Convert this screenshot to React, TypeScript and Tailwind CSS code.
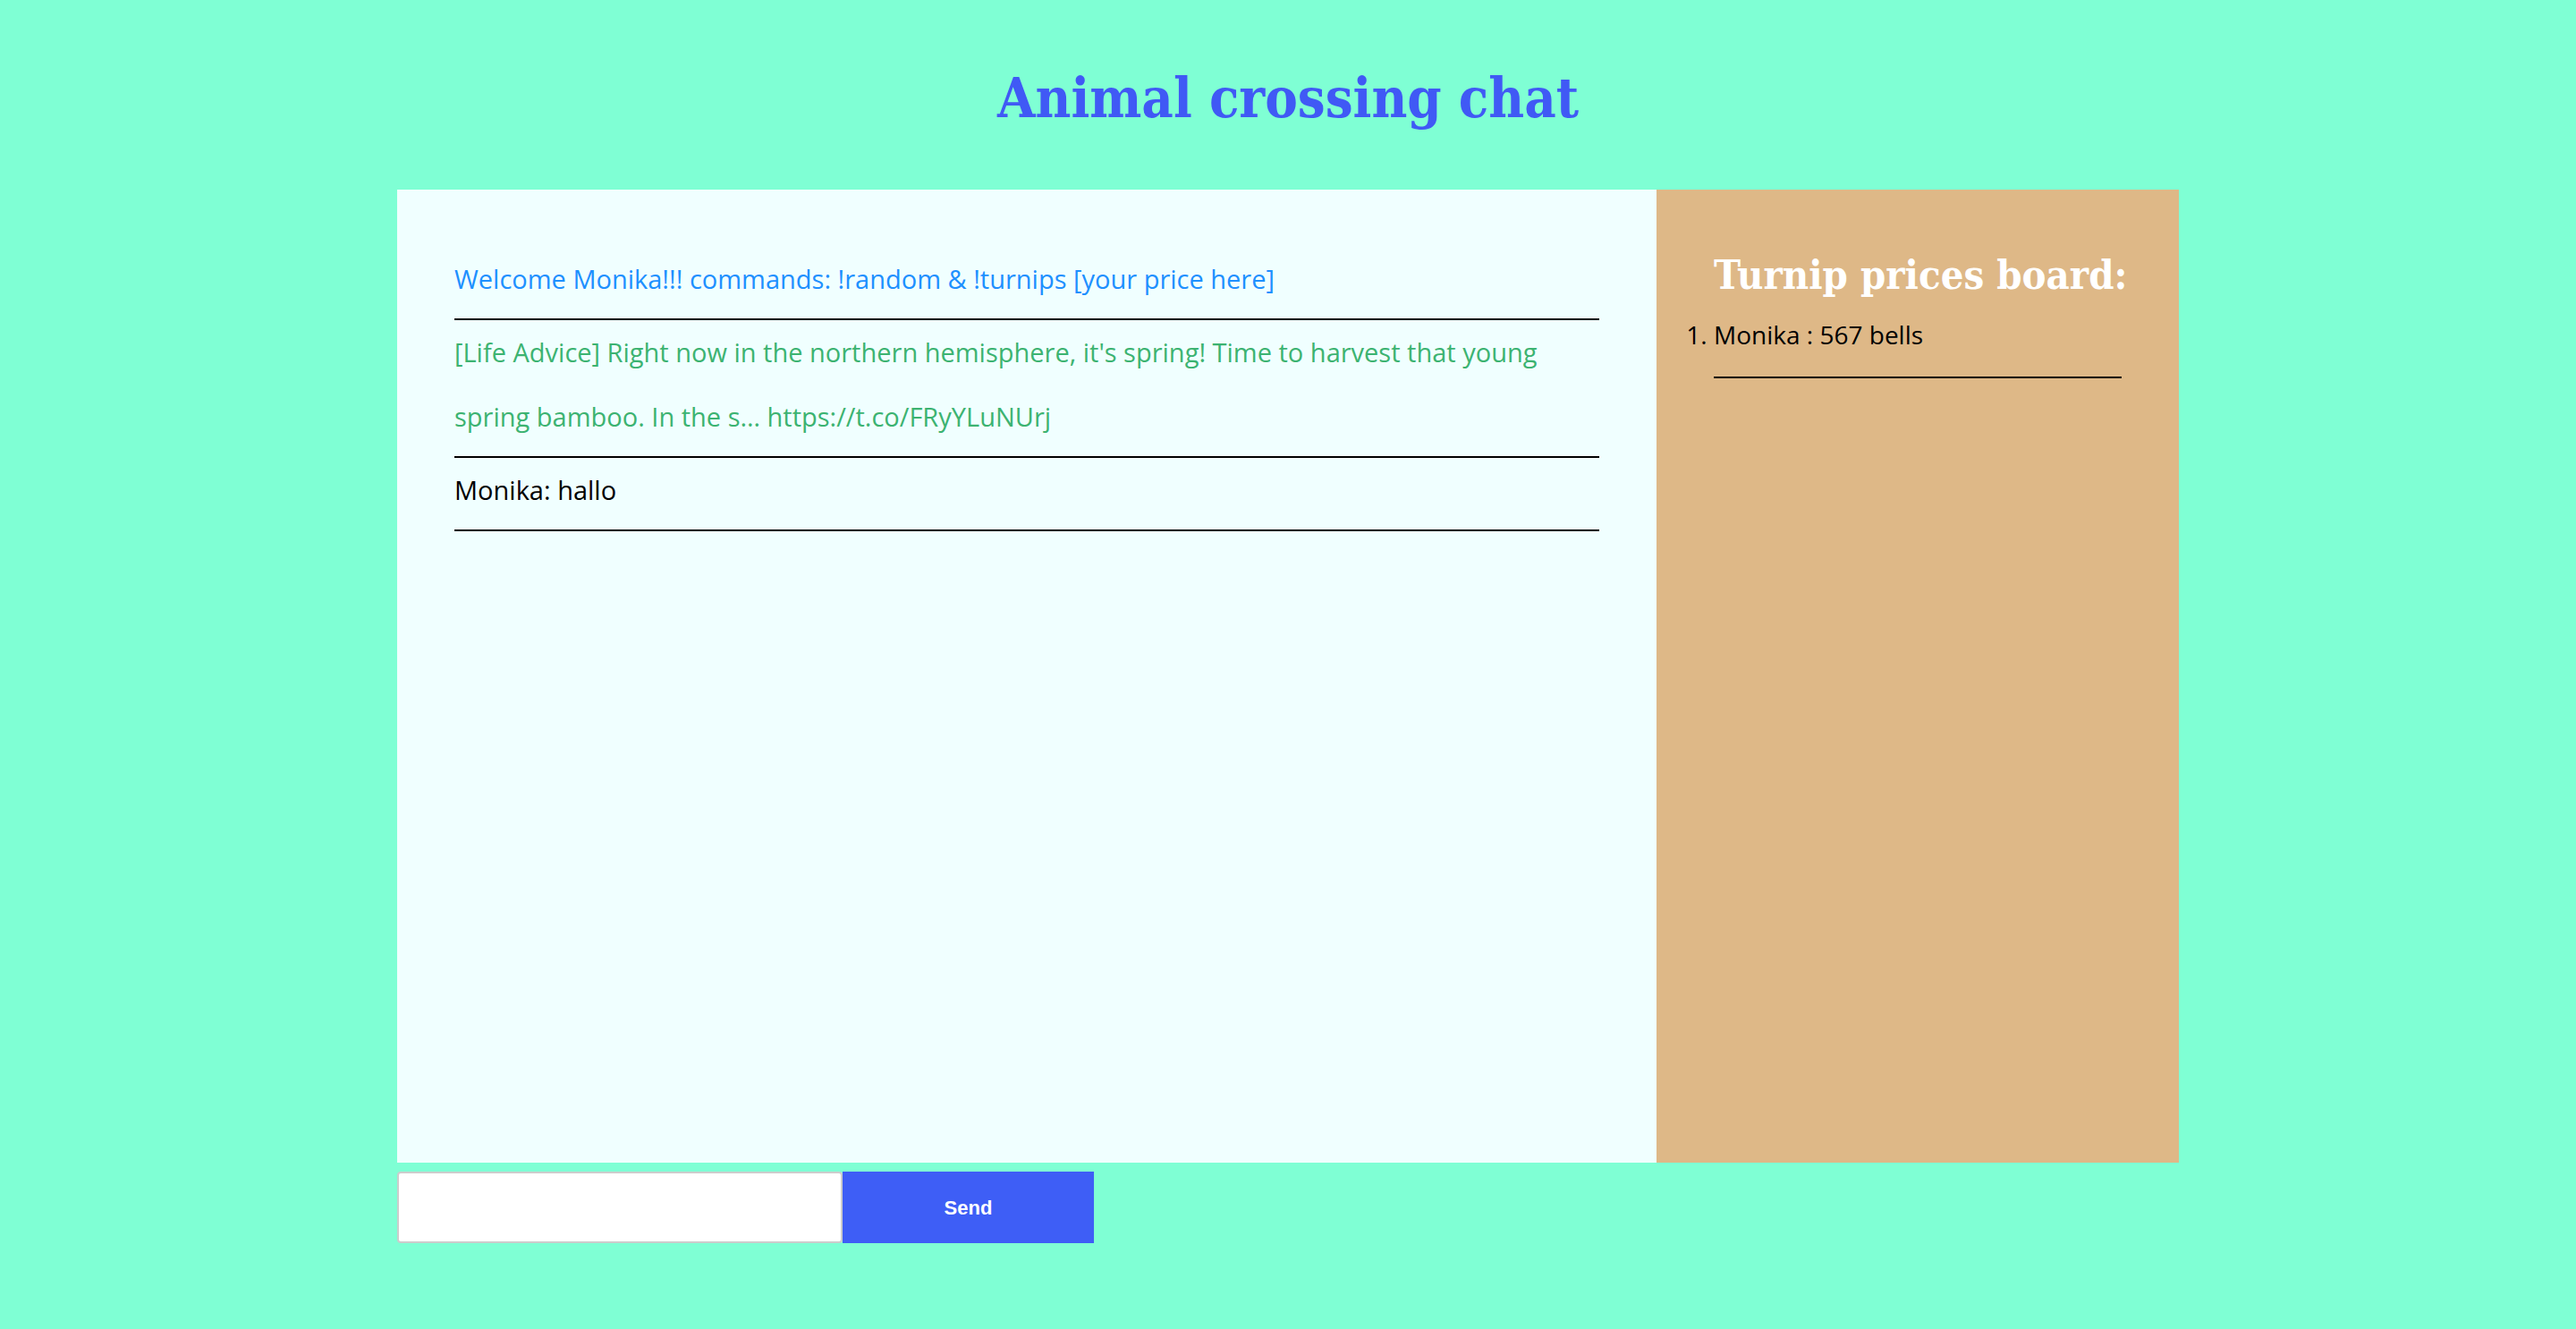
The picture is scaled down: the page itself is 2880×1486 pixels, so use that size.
import { useState } from "react"

type Message = {
  text: string
  color: string
}

const messages: Message[] = [
  {
    text: "Welcome Monika!!! commands: !random & !turnips [your price here]",
    color: "text-[#1e90ff]",
  },
  {
    text: "[Life Advice] Right now in the northern hemisphere, it's spring! Time to harvest that young spring bamboo. In the s… https://t.co/FRyYLuNUrj",
    color: "text-[#3cb371]",
  },
  { text: "Monika: hallo", color: "text-black" },
]

const prices = [{ name: "Monika", price: 567 }]

export default function App() {
  const [draft, setDraft] = useState("")

  return (
    <div className="min-h-screen bg-[#7fffd4] flex flex-col items-center font-['Open_Sans',sans-serif]">
      <h1 className="pt-[78px] pb-[70px] text-[61px] leading-[64px] font-bold text-[#4059f5] font-['DejaVu_Serif',serif] font-stretch-condensed">
        Animal crossing chat
      </h1>

      <div className="w-[1992px]">
        <div className="flex h-[1088px]">
          <div className="flex-1 bg-[#f0ffff] px-16 pt-16">
            {messages.map((m, i) => (
              <p
                key={i}
                className={`border-b-2 border-black text-[29px] leading-[72px] pb-2 ${m.color}`}
              >
                {m.text}
              </p>
            ))}
          </div>

          <div className="w-[584px] bg-[#deb887] px-16 pt-[66px]">
            <h2 className="text-center whitespace-nowrap text-white text-[45px] leading-[60px] font-bold font-['DejaVu_Serif',serif] font-stretch-condensed">
              Turnip prices board:
            </h2>
            <ol className="list-decimal mt-[16px]">
              {prices.map((p) => (
                <li
                  key={p.name}
                  className="border-b-2 border-black text-[28px] leading-[40px] pb-[27px]"
                >
                  {p.name} : {p.price} bells
                </li>
              ))}
            </ol>
          </div>
        </div>

        <div className="flex mt-[10px]">
          <input
            value={draft}
            onChange={(e) => setDraft(e.target.value)}
            className="w-[498px] h-[80px] bg-white border-2 border-[#cccccc] rounded-[4px] px-4 text-[24px] outline-none"
          />
          <button className="w-[281px] h-[80px] bg-[#3e5ef6] text-white text-[22px] font-bold font-['Liberation_Sans',sans-serif]">
            Send
          </button>
        </div>
      </div>
    </div>
  )
}
